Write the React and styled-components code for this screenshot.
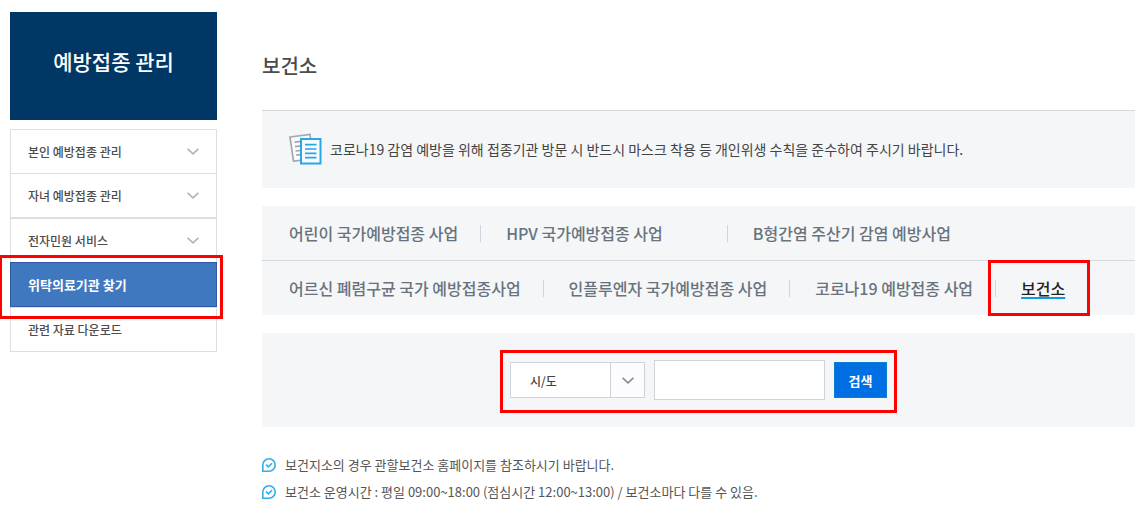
import React, { useState } from "react"
import styled, { createGlobalStyle, css } from "styled-components"

const menu = [
  { label: "본인 예방접종 관리", sub: true },
  { label: "자녀 예방접종 관리", sub: true },
  { label: "전자민원 서비스", sub: true, divided: true },
  { label: "위탁의료기관 찾기", active: true },
  { label: "관련 자료 다운로드" },
]

const tabRows = [
  [
    { label: "어린이 국가예방접종 사업" },
    { label: "HPV 국가예방접종 사업", wide: true },
    { label: "B형간염 주산기 감염 예방사업" },
  ],
  [
    { label: "어르신 폐렴구균 국가 예방접종사업" },
    { label: "인플루엔자 국가예방접종 사업" },
    { label: "코로나19 예방접종 사업" },
    { label: "보건소", active: true },
  ],
]

const notes = [
  "보건지소의 경우 관할보건소 홈페이지를 참조하시기 바랍니다.",
  "보건소 운영시간 : 평일 09:00~18:00 (점심시간 12:00~13:00) / 보건소마다 다를 수 있음.",
]

const Chevron = ({ color }) => (
  <svg width="12" height="7" viewBox="0 0 12 7" fill="none" aria-hidden="true">
    <path d="M0.6 0.8L6 5.8L11.4 0.8" stroke={color} strokeWidth="1.7" />
  </svg>
)

const PapersIcon = () => (
  <svg width="34" height="32" viewBox="0 0 34 32" fill="none" aria-hidden="true">
    <path d="M1 4L21 1.5L22.5 14L24 26L4.5 28Z" fill="#fafafb" stroke="#a3a8af" strokeWidth="1.7" />
    <path
      d="M5.5 9.2L17 7.9M6 13.6L12 12.9M6.6 18L12 17.4M7.2 22.2L12 21.6"
      stroke="#a3a8af"
      strokeWidth="1.7"
    />
    <rect x="12" y="6" width="19.5" height="24.5" fill="#f7fbfe" stroke="#26a7e8" strokeWidth="2" />
    <path
      d="M16 11.7H27.5M16 16H27.5M16 20.3H27.5M16 24.7H27.5"
      stroke="#26a7e8"
      strokeWidth="1.7"
    />
  </svg>
)

const CheckBubble = () => (
  <svg width="14" height="14" viewBox="0 0 14 14" fill="none" aria-hidden="true">
    <path
      d="M0.8 13.2V7A6.2 6.2 0 1 1 7 13.2Z"
      stroke="#35ade8"
      strokeWidth="1.6"
    />
    <path d="M4 6.6L6.4 8.8L10 5.2" stroke="#35ade8" strokeWidth="1.6" />
  </svg>
)

const App = () => {
  const [keyword, setKeyword] = useState("")

  return (
    <Page>
      <GlobalStyle />
      <Sidebar>
        <SidebarTitle>예방접종 관리</SidebarTitle>
        <Menu>
          {menu.map(item => (
            <MenuItem key={item.label} $active={item.active}>
              <MenuLink href="#" $active={item.active} $divided={item.divided}>
                {item.label}
                {item.sub && <Chevron color="#b5b5b5" />}
              </MenuLink>
            </MenuItem>
          ))}
        </Menu>
      </Sidebar>
      <Content>
        <Heading>보건소</Heading>
        <Notice>
          <PapersIcon />
          <p>
            코로나19 감염 예방을 위해 접종기관 방문 시 반드시 마스크 착용 등
            개인위생 수칙을 준수하여 주시기 바랍니다.
          </p>
        </Notice>
        <Tabs>
          {tabRows.map((row, key) => (
            <TabRow key={key}>
              {row.map(tab => (
                <Tab key={tab.label} $wide={tab.wide} $active={tab.active}>
                  <TabLink href="#" $active={tab.active}>
                    {tab.label}
                  </TabLink>
                </Tab>
              ))}
            </TabRow>
          ))}
        </Tabs>
        <SearchPanel>
          <SearchForm onSubmit={e => e.preventDefault()}>
            <SelectBox>
              <Select aria-label="시/도">
                <option>시/도</option>
              </Select>
              <SelectArrow>
                <Chevron color="#8a8d93" />
              </SelectArrow>
            </SelectBox>
            <KeywordInput
              type="text"
              aria-label="보건소"
              value={keyword}
              onChange={e => setKeyword(e.target.value)}
            />
            <SearchButton type="submit">검색</SearchButton>
          </SearchForm>
        </SearchPanel>
        <Notes>
          {notes.map(note => (
            <Note key={note}>
              <CheckBubble />
              {note}
            </Note>
          ))}
        </Notes>
      </Content>
    </Page>
  )
}

const GlobalStyle = createGlobalStyle`
  * {
    box-sizing: border-box;
  }

  body {
    margin: 0;
    background: #ffffff;
    color: #4c4c4c;
    font-family: "Noto Sans CJK KR", "Noto Sans", sans-serif;
    font-size: 14px;
  }

  h1, h2, p, ul {
    margin: 0;
    padding: 0;
  }

  ul {
    list-style: none;
  }

  a {
    color: inherit;
    text-decoration: none;
  }
`

// red frame around the parts the guide points at
const marked = css`
  position: relative;

  &::after {
    content: "";
    position: absolute;
    z-index: 1;
    border: 3px solid #ff0000;
    pointer-events: none;
  }
`

const Page = styled.div`
  display: flex;
  align-items: flex-start;
  gap: 45px;
  padding: 12px 5px 0 10px;
`

// sidebar

const Sidebar = styled.aside`
  width: 207px;
  flex-shrink: 0;
`

const SidebarTitle = styled.h2`
  display: flex;
  align-items: center;
  justify-content: center;
  height: 108px;
  padding-bottom: 10px;
  margin-bottom: 9px;
  background: #003764;
  color: #ffffff;
  font-size: 21px;
  font-weight: 500;
`

const Menu = styled.ul`
  border-bottom: 1px solid #dfdfdf;
`

const MenuItem = styled.li`
  ${props =>
    props.$active &&
    css`
      ${marked}

      &::after {
        inset: -7px -6px -12px -11px;
      }
    `}
`

const MenuLink = styled.a`
  display: flex;
  align-items: center;
  justify-content: space-between;
  height: ${props => (props.$active || props.$divided ? "45px" : "44px")};
  padding: 0 17px;
  border: 1px solid ${props => (props.$active ? "#2f58a6" : "#dfdfdf")};
  border-top-width: ${props => (props.$divided ? "2px" : "1px")};
  border-bottom-width: ${props => (props.$active ? "1px" : "0")};
  background: ${props => (props.$active ? "#4078c0" : "#ffffff")};
  color: ${props => (props.$active ? "#ffffff" : "#4c4c4c")};
  font-size: ${props => (props.$active ? "13px" : "12px")};
  font-weight: ${props => (props.$active ? "700" : "500")};
`

// content

const Content = styled.main`
  flex: 1;
  min-width: 0;
`

const Heading = styled.h1`
  padding: 38px 0 29px;
  border-bottom: 1px solid #d5d8dc;
  color: #4c4c4c;
  font-size: 20px;
  font-weight: 500;
  line-height: 31px;
`

const Notice = styled.div`
  display: flex;
  align-items: center;
  gap: 7px;
  height: 77px;
  padding: 0 27px 2px;
  margin-bottom: 18px;
  background: #f5f6f8;
  color: #444444;
`

const Tabs = styled.nav`
  margin-bottom: 18px;
  background: #f5f6f8;
`

const TabRow = styled.ul`
  display: flex;
  align-items: center;
  height: 54px;
  padding: 0 27px;

  &:not(:first-child) {
    height: 55px;
    border-top: 1px solid #d5d8dc;
  }
`

const Tab = styled.li`
  display: flex;
  align-items: center;
  margin-right: ${props => (props.$wide ? "42px" : "0")};

  &:not(:first-child)::before {
    content: "";
    width: 1px;
    height: 17px;
    margin: 0 25px 0 22px;
    background: #cdd6df;
  }

  ${props =>
    props.$active &&
    css`
      ${marked}

      &::after {
        inset: -16px -25px -16px 15px;
      }
    `}
`

const TabLink = styled.a`
  color: ${props => (props.$active ? "#222222" : "#68737d")};
  font-size: 16px;
  font-weight: 500;
  line-height: 24px;
  ${props =>
    props.$active &&
    css`
      text-decoration: underline 2px #0e9be0;
      text-decoration-skip-ink: none;
      text-underline-offset: 2px;
    `}
`

// search

const SearchPanel = styled.div`
  display: flex;
  align-items: center;
  justify-content: center;
  height: 94px;
  margin-bottom: 24px;
  background: #f5f6f8;
`

const SearchForm = styled.form`
  display: flex;
  align-items: center;
  gap: 9px;
  ${marked}

  &::after {
    inset: -10px -10px -13px;
  }
`

const SelectBox = styled.div`
  position: relative;
  display: flex;
  width: 135px;
  height: 36px;
`

const Select = styled.select`
  appearance: none;
  width: 100%;
  padding: 0 53px 0 19px;
  border: 1px solid #cfd3da;
  border-radius: 0;
  background: #ffffff;
  color: #444444;
  font-family: inherit;
  font-size: 12px;
  font-weight: 500;
`

const SelectArrow = styled.span`
  position: absolute;
  top: 1px;
  right: 1px;
  bottom: 1px;
  width: 34px;
  display: flex;
  align-items: center;
  justify-content: center;
  border-left: 1px solid #cfd3da;
  background: #fcfcfe;
  pointer-events: none;
`

const KeywordInput = styled.input`
  width: 171px;
  height: 40px;
  padding: 0 10px;
  border: 1px solid #cfd3da;
  background: #ffffff;
  font-family: inherit;
  font-size: 13px;
`

const SearchButton = styled.button`
  width: 53px;
  height: 36px;
  padding: 0;
  border: 1px solid #0a7fd0;
  background: #006fe3;
  color: #ffffff;
  font-family: inherit;
  font-size: 13px;
  font-weight: 700;
  cursor: pointer;
`

// notes

const Notes = styled.ul`
  display: flex;
  flex-direction: column;
`

const Note = styled.li`
  display: flex;
  align-items: center;
  gap: 9px;
  color: #555555;
  font-size: 13px;
  line-height: 27px;
`

export default App
